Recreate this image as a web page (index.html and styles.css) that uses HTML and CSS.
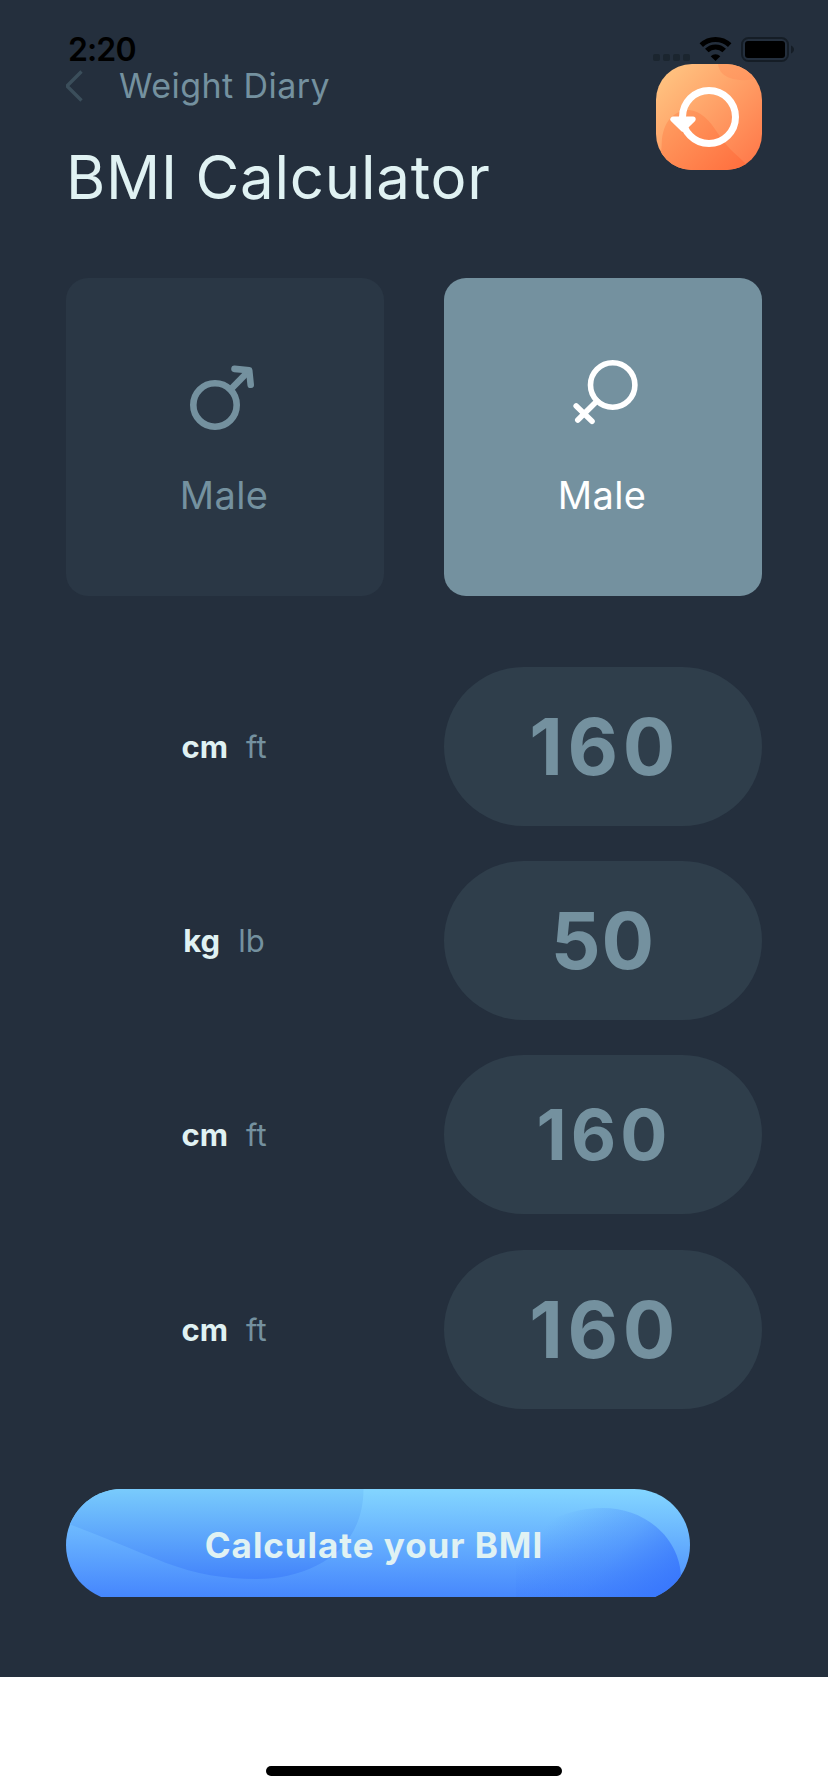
FILE: index.html
```html
<!DOCTYPE html>
<html lang="en">
<head>
<meta charset="utf-8">
<title>BMI Calculator</title>
<link rel="stylesheet" href="styles.css">
</head>
<body>
<main class="screen">
  <div class="status">
    <span class="time">2:20</span>
    <div class="status-icons">
      <svg width="143" height="28" viewBox="0 0 143 28">
        <g fill="#1b252f">
          <rect x="1" y="18" width="7" height="7" rx="2"/>
          <rect x="11" y="18" width="7" height="7" rx="2"/>
          <rect x="21" y="18" width="7" height="7" rx="2"/>
          <rect x="31" y="18" width="7" height="7" rx="2"/>
        </g>
        <g fill="none" stroke="#000" stroke-width="5">
          <path d="M49.3 9.1A20.5 20.5 0 0 1 77.7 9.1"/>
          <path d="M54.8 14.6A12.3 12.3 0 0 1 72.2 14.6"/>
        </g>
        <path d="M63.5 25L58.7 20.2A6.8 6.8 0 0 1 68.3 20.2Z" fill="#000"/>
        <rect x="90" y="2" width="46" height="23" rx="6.5" fill="none" stroke="#151d26" stroke-width="2"/>
        <rect x="93" y="5" width="40" height="17" rx="3" fill="#000"/>
        <path d="M139 9.5C143 11 143 16 139 17.5Z" fill="#151d26"/>
      </svg>
    </div>
  </div>

  <header class="header">
    <div>
      <a class="back">
        <svg width="20" height="36" viewBox="0 0 20 36"><path d="M15.5 3.5L1 18L15.5 32.5" fill="none" stroke="#3b4e5b" stroke-width="3.4"/></svg>
        <span>Weight Diary</span>
      </a>
      <h1 class="title">BMI Calculator</h1>
    </div>
    <svg class="reset" width="106" height="106" viewBox="0 0 106 106">
      <defs>
        <linearGradient id="orange" x1="0" y1="0" x2="1" y2="1"><stop offset="0.05" stop-color="#ffc582"/><stop offset="1" stop-color="#ff7446"/></linearGradient>
        <linearGradient id="ember" x1="0" y1="0.3" x2="1" y2="1"><stop offset="0" stop-color="#ff9c60"/><stop offset="1" stop-color="#ff6c3c"/></linearGradient>
        <linearGradient id="peach" x1="0" y1="0" x2="1" y2="0.6"><stop offset="0" stop-color="#ffa166"/><stop offset="1" stop-color="#ff9660"/></linearGradient>
      </defs>
      <rect width="106" height="106" fill="url(#orange)"/>
      <path d="M0 106C5 94 5.5 86 5.7 79C6.5 58 18 46 33 46C45 47 54 57 61 68C71 84 80 90 89 99L94 106Z" fill="url(#ember)"/>
      <path d="M62 0C63 8 68 12 74 14C82 17 94 17 106 13V0Z" fill="url(#peach)"/>
      <circle cx="53" cy="53" r="26.5" fill="none" stroke="#fff" stroke-width="7"/>
      <path d="M17 55.3H37L27 65Z" fill="#fff" stroke="#fff" stroke-width="5.4" stroke-linejoin="round"/>
    </svg>
  </header>

  <section class="cards">
    <div class="card">
      <svg width="80" height="80" viewBox="0 0 80 80" fill="none" stroke="currentColor" stroke-width="6.6">
        <circle cx="30" cy="47" r="21.7"/>
        <path d="M45.8 31.2L63.5 13.3"/>
        <path d="M49.5 10.9L64.2 12.3L65.7 26.8" stroke-linecap="round" stroke-linejoin="round"/>
      </svg>
      <span class="card-label">Male</span>
    </div>
    <div class="card card-on">
      <svg width="80" height="80" viewBox="0 0 80 80" fill="none" stroke="currentColor" stroke-width="5.6" stroke-linecap="round">
        <circle cx="49.7" cy="27" r="22.2"/>
        <path d="M34 43L14.8 62M13.2 48L29 63.2"/>
      </svg>
      <span class="card-label">Male</span>
    </div>
  </section>

  <section class="rows">
    <div class="row"><div class="units"><b>cm</b><span>ft</span></div><div class="pill">160</div></div>
    <div class="row"><div class="units"><b>kg</b><span>lb</span></div><div class="pill pill-short">50</div></div>
    <div class="row"><div class="units"><b>cm</b><span>ft</span></div><div class="pill pill-small">160</div></div>
    <div class="row row-last"><div class="units"><b>cm</b><span>ft</span></div><div class="pill">160</div></div>
  </section>

  <div class="button">
    <svg class="button-art" width="624" height="112" viewBox="0 0 624 112">
      <defs>
        <linearGradient id="sky" x1="0" y1="0" x2="-0.03" y2="1"><stop offset="0" stop-color="#82d4ff"/><stop offset="1" stop-color="#4383fd"/></linearGradient>
        <linearGradient id="wave" x1="0" y1="0" x2="0" y2="1"><stop offset="0" stop-color="#79cbfc"/><stop offset="1" stop-color="#4384fb"/></linearGradient>
        <linearGradient id="hill" gradientUnits="userSpaceOnUse" x1="495" y1="20" x2="600" y2="115"><stop offset="0" stop-color="#3775fc" stop-opacity="0"/><stop offset="0.5" stop-color="#3775fc" stop-opacity="0.35"/><stop offset="1" stop-color="#3775fc" stop-opacity="0.95"/></linearGradient>
      </defs>
      <rect width="624" height="112" fill="url(#sky)"/>
      <path d="M0 34C30 45 65 60 100 74C130 85 158 90 190 90C245 90 297.5 62 297.5 0H0Z" fill="url(#wave)"/>
      <path d="M450 60C470 32 505 19 537 19C580 19 615 50 615 90V112H450Z" fill="url(#hill)"/>
    </svg>
    <span class="button-label">Calculate your BMI</span>
  </div>
</main>
<footer class="footer"><div class="home-bar"></div></footer>
</body>
</html>
```
FILE: styles.css
```css
* { box-sizing: border-box; }

body {
  margin: 0;
  background: #fff;
  font-family: Inter, "Liberation Sans", sans-serif;
}

.screen {
  height: 1677px;
  padding: 0 66px;
  background: #242f3d;
}

.status {
  display: flex;
  justify-content: space-between;
  height: 64px;
  padding: 30px 0 0 2px;
  margin-right: -33px;
}

.time {
  font-size: 32px;
  font-weight: 600;
  line-height: 40px;
  letter-spacing: -0.9px;
  color: #000;
}

.status-icons { padding-top: 6px; }
.status-icons svg { display: block; }

.header {
  display: flex;
  justify-content: space-between;
  align-items: flex-start;
  height: 214px;
}

.back {
  display: flex;
  align-items: center;
  gap: 33px;
  height: 43px;
  font-size: 34px;
  letter-spacing: 0.45px;
  color: #74919f;
}

.title {
  margin: 32px 0 0;
  font-size: 60px;
  font-weight: 400;
  line-height: 76px;
  letter-spacing: 0.75px;
  color: #e0f2f3;
}

.reset { border-radius: 36px; }

.cards {
  display: flex;
  justify-content: space-between;
}

.card {
  display: flex;
  flex-direction: column;
  align-items: center;
  gap: 34px;
  width: 318px;
  height: 318px;
  padding-top: 80px;
  border-radius: 22px;
  background: #2a3745;
  color: #74919f;
}

.card-on {
  background: #74919f;
  color: #fff;
}

.card-label {
  margin-right: 2px;
  font-size: 38px;
  line-height: 46px;
  letter-spacing: 0.4px;
}

.rows {
  display: grid;
  gap: 35px;
  padding-top: 71px;
}

.row {
  display: flex;
  justify-content: space-between;
  height: 159px;
}

.row-last { margin-top: 1px; }

.units {
  display: flex;
  align-items: center;
  justify-content: center;
  gap: 18px;
  width: 318px;
  padding-right: 2px;
  font-size: 31px;
  color: #74919f;
}

.units b {
  font-weight: 700;
  color: #e0f2f3;
}

.pill {
  display: flex;
  align-items: center;
  justify-content: center;
  width: 318px;
  padding-left: 3px;
  border-radius: 80px;
  background: #2f3e4b;
  color: #74919f;
  font-size: 78px;
  font-weight: 700;
  letter-spacing: 4.6px;
}

.pill-short {
  padding-left: 0;
  letter-spacing: 1px;
}

.pill-small {
  padding-left: 2px;
  font-size: 70px;
  letter-spacing: 4px;
}

.button {
  display: grid;
  justify-items: center;
  width: 624px;
  height: 108px;
  margin-top: 80px;
  overflow: hidden;
}

.button-art,
.button-label {
  grid-area: 1 / 1;
}

.button-art { border-radius: 56px; }

.button-label {
  z-index: 1;
  margin-right: 8px;
  font-size: 35px;
  font-weight: 700;
  line-height: 112px;
  letter-spacing: 0.95px;
  color: #e0f2f3;
}

.footer {
  display: flex;
  justify-content: center;
  height: 115px;
  padding-top: 89px;
}

.home-bar {
  width: 296px;
  height: 10px;
  border-radius: 5px;
  background: #000;
}
```
